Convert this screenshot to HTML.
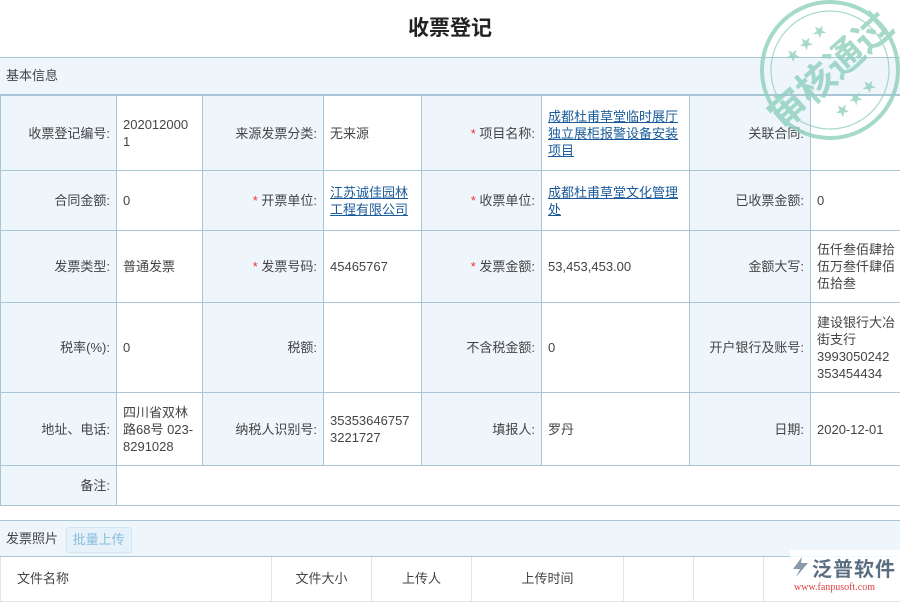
<!DOCTYPE html>
<html><head><meta charset="utf-8"><style>
*{margin:0;padding:0;box-sizing:border-box}
body{width:900px;height:600px;overflow:hidden;background:#fff;font-family:"Liberation Sans","Noto Sans CJK SC",sans-serif;font-size:13px;color:#444;position:relative}
h1{position:absolute;top:12px;left:0;width:900px;text-align:center;font-size:21px;font-weight:bold;color:#222}
.sec{position:absolute;left:0;width:900px;background:#eef5fb;border-top:1px solid #a8c6d6;border-bottom:1px solid #a8c6d6;padding-left:6px;font-size:13px}
table{position:absolute;left:0;border-collapse:collapse;table-layout:fixed}
td{border:1px solid #a8c6d6;padding:0 6px;vertical-align:middle;line-height:17px;word-break:break-all}
td.l{background:#eef5fb;text-align:right}
td.v{background:#fff}
.r{color:#e33}
a{color:#1a5a9a;text-decoration:underline}
.t2 td{border-color:#dde6ec;border-top:none}
</style></head><body>
<h1>收票登记</h1>
<div class="sec" style="top:57px;height:38px;line-height:36px">基本信息</div>
<table style="top:95px;width:901px">
<colgroup><col style="width:116px"><col style="width:86px"><col style="width:121px"><col style="width:98px"><col style="width:120px"><col style="width:148px"><col style="width:121px"><col style="width:91px"></colgroup>
<tr style="height:75px"><td class="l">收票登记编号:</td><td class="v">202012000<br>1</td><td class="l">来源发票分类:</td><td class="v">无来源</td><td class="l"><span class="r">*</span> 项目名称:</td><td class="v"><a>成都杜甫草堂临时展厅独立展柜报警设备安装项目</a></td><td class="l">关联合同:</td><td class="v"></td></tr>
<tr style="height:60px"><td class="l">合同金额:</td><td class="v">0</td><td class="l"><span class="r">*</span> 开票单位:</td><td class="v"><a>江苏诚佳园林工程有限公司</a></td><td class="l"><span class="r">*</span> 收票单位:</td><td class="v"><a>成都杜甫草堂文化管理处</a></td><td class="l">已收票金额:</td><td class="v">0</td></tr>
<tr style="height:72px"><td class="l">发票类型:</td><td class="v">普通发票</td><td class="l"><span class="r">*</span> 发票号码:</td><td class="v">45465767</td><td class="l"><span class="r">*</span> 发票金额:</td><td class="v">53,453,453.00</td><td class="l">金额大写:</td><td class="v">伍仟叁佰肆拾<br>伍万叁仟肆佰<br>伍拾叁</td></tr>
<tr style="height:90px"><td class="l">税率(%):</td><td class="v">0</td><td class="l">税额:</td><td class="v"></td><td class="l">不含税金额:</td><td class="v">0</td><td class="l">开户银行及账号:</td><td class="v">建设银行大冶<br>街支行<br>3993050242<br>353454434</td></tr>
<tr style="height:73px"><td class="l">地址、电话:</td><td class="v">四川省双林<br>路68号 023-<br>8291028</td><td class="l">纳税人识别号:</td><td class="v">35353646757<br>3221727</td><td class="l">填报人:</td><td class="v">罗丹</td><td class="l">日期:</td><td class="v">2020-12-01</td></tr>
<tr style="height:40px"><td class="l">备注:</td><td class="v" colspan="7"></td></tr>
</table>
<div class="sec" style="top:520px;height:37px;line-height:35px">发票照片 <span style="display:inline-block;margin-left:4px;padding:0 6px;height:26px;line-height:24px;border:1px solid #d3e6f3;border-radius:3px;background:#e6f1fa;color:#8bbde0;vertical-align:middle">批量上传</span></div>
<table class="t2" style="top:557px;width:900px">
<colgroup><col style="width:271px"><col style="width:100px"><col style="width:100px"><col style="width:152px"><col style="width:70px"><col style="width:70px"><col style="width:137px"></colgroup>
<tr style="height:44px"><td style="padding-left:16px">文件名称</td><td style="text-align:center">文件大小</td><td style="text-align:center">上传人</td><td style="text-align:center">上传时间</td><td></td><td></td><td></td></tr>
</table>
<div style="position:absolute;left:790px;top:550px;width:110px;height:50px;background:rgba(255,255,255,0.85)">
<svg style="position:absolute;left:0;top:5px" width="22" height="24" viewBox="0 0 22 24"><path d="M12 2 L3 14 L10 14 L6 22 L18 8 L11 8 Z" fill="#8a9aa8"/></svg>
<div style="position:absolute;left:22px;top:3px;font-size:20px;font-weight:bold;color:#5a6e82;letter-spacing:1px">泛普软件</div>
<div style="position:absolute;left:4px;top:32px;font-size:10px;color:#d44;font-family:'Liberation Serif',serif">www.fanpusoft.com</div>
</div>
<svg style="position:absolute;left:750px;top:-5px" width="160" height="150" viewBox="0 0 160 150">
<g transform="rotate(-42 80 75)" fill="none" stroke="#8fd0bc" opacity="0.8">
<circle cx="80" cy="75" r="68" stroke-width="4"/><circle cx="80" cy="75" r="59" stroke-width="1.2"/>
<text x="80" y="89" text-anchor="middle" font-size="38" font-weight="bold" fill="#8fd0bc" stroke="none" font-family="Liberation Sans,Noto Sans CJK SC,sans-serif">审核通过</text>
<text x="80" y="44" text-anchor="middle" font-size="14" fill="#8fd0bc" stroke="none">★ ★ ★</text>
<text x="80" y="118" text-anchor="middle" font-size="14" fill="#8fd0bc" stroke="none">★ ★ ★</text>
</g></svg>
</body></html>
